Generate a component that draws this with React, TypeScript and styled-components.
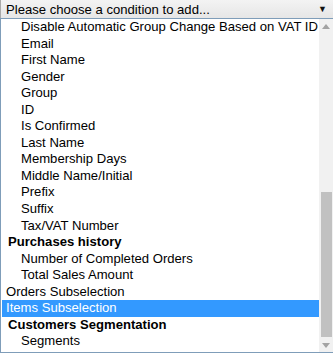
import styled, { createGlobalStyle } from 'styled-components'

const GlobalStyle = createGlobalStyle`
    html, body {
        margin: 0;
        padding: 0;
        background: #fff;
    }
    body {
        font-family: "Liberation Sans", Arial, sans-serif;
        font-size: 13.1px;
        color: #000;
    }
`

interface Entry {
    label: string
    kind: 'group' | 'child' | 'option'
    selected?: boolean
}

const entries: Entry[] = [
    { label: 'Disable Automatic Group Change Based on VAT ID', kind: 'child' },
    { label: 'Email', kind: 'child' },
    { label: 'First Name', kind: 'child' },
    { label: 'Gender', kind: 'child' },
    { label: 'Group', kind: 'child' },
    { label: 'ID', kind: 'child' },
    { label: 'Is Confirmed', kind: 'child' },
    { label: 'Last Name', kind: 'child' },
    { label: 'Membership Days', kind: 'child' },
    { label: 'Middle Name/Initial', kind: 'child' },
    { label: 'Prefix', kind: 'child' },
    { label: 'Suffix', kind: 'child' },
    { label: 'Tax/VAT Number', kind: 'child' },
    { label: 'Purchases history', kind: 'group' },
    { label: 'Number of Completed Orders', kind: 'child' },
    { label: 'Total Sales Amount', kind: 'child' },
    { label: 'Orders Subselection', kind: 'option' },
    { label: 'Items Subselection', kind: 'option', selected: true },
    { label: 'Customers Segmentation', kind: 'group' },
    { label: 'Segments', kind: 'child' },
]

const Wrapper = styled.div`
    width: 333px;
    height: 353px;
    display: flex;
    flex-direction: column;
    overflow: hidden;
`

const SelectBar = styled.div`
    height: 18px;
    box-sizing: border-box;
    display: flex;
    align-items: center;
    justify-content: space-between;
    padding: 0 6px 0 5px;
    border-left: 1px solid #a9a9a9;
    background: linear-gradient(#f3f3f3, #e6e6e6);
    white-space: nowrap;
`

const Caret = styled.span`
    font-size: 9px;
    line-height: 1;
    color: #111;
`

const ListBox = styled.div`
    display: flex;
    height: 333px;
    border: 1px solid #7f9db9;
    border-right: none;
`

const Rows = styled.div`
    flex: 1;
    min-width: 0;
    display: flex;
    flex-direction: column;
`

const Row = styled.div<{ $kind: Entry['kind']; $selected?: boolean }>`
    height: 16.55px;
    line-height: 16.55px;
    white-space: nowrap;
    overflow: hidden;
    margin-left: 1px;
    padding-left: ${(p) => (p.$kind === 'child' ? '19px' : p.$kind === 'group' ? '6px' : '4px')};
    font-weight: ${(p) => (p.$kind === 'group' ? 'bold' : 'normal')};
    background: ${(p) => (p.$selected ? '#3399ff' : 'transparent')};
    color: ${(p) => (p.$selected ? '#fff' : '#000')};
`

const ScrollBar = styled.div`
    width: 14px;
    display: flex;
    flex-direction: column;
    background: #f1f1f1;
`

const ArrowButton = styled.div`
    height: 14px;
    display: flex;
    align-items: center;
    justify-content: center;
`

const Track = styled.div`
    flex: 1;
    display: flex;
    flex-direction: column;
    justify-content: flex-end;
    padding: 0 1px 1px 2px;
`

const Thumb = styled.div`
    height: 145px;
    background: #c1c1c1;
`

const Triangle = ({ up }: { up?: boolean }) => (
    <svg width="8" height="5" viewBox="0 0 8 5">
        <polygon points={up ? '4,0 8,5 0,5' : '0,0 8,0 4,5'} fill="#a3a3a3" />
    </svg>
)

const App = () => {
    return (
        <Wrapper>
            <GlobalStyle />
            <SelectBar>
                <span>Please choose a condition to add...</span>
                <Caret>▼</Caret>
            </SelectBar>
            <ListBox>
                <Rows>
                    {entries.map((e, i) => (
                        <Row key={i} $kind={e.kind} $selected={e.selected}>
                            {e.label}
                        </Row>
                    ))}
                </Rows>
                <ScrollBar>
                    <ArrowButton>
                        <Triangle up />
                    </ArrowButton>
                    <Track>
                        <Thumb />
                    </Track>
                    <ArrowButton>
                        <Triangle />
                    </ArrowButton>
                </ScrollBar>
            </ListBox>
        </Wrapper>
    )
}

export default App
